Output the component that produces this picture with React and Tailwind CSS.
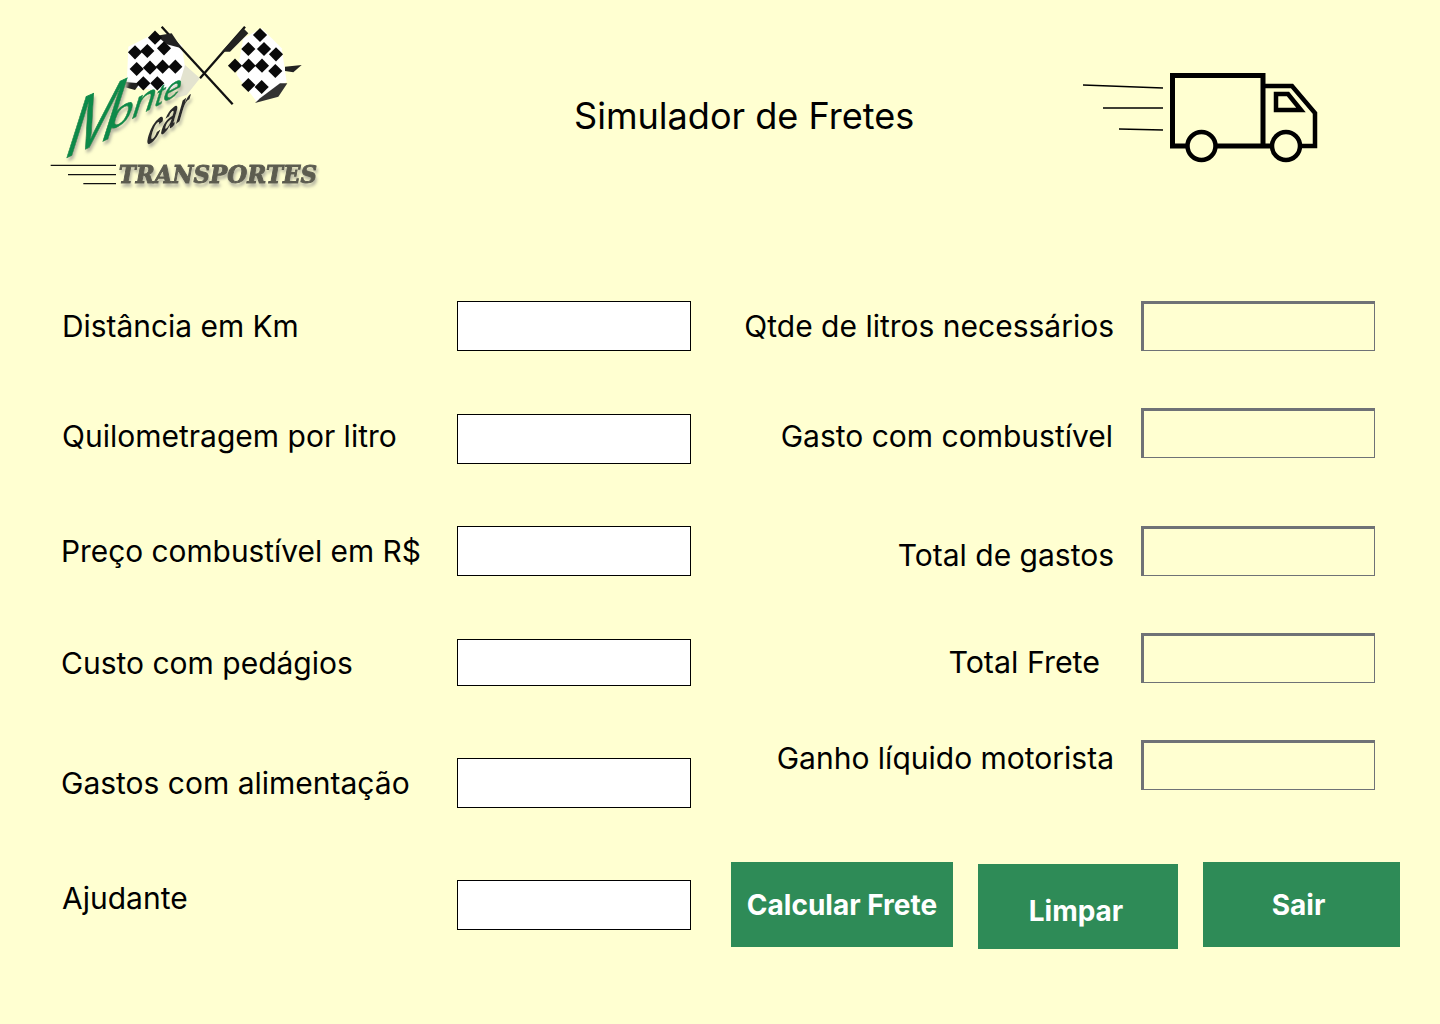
const leftFields = [
  { label: "Distância em Km", h: "h-[50px]", mt: "mt-0", cls: "pl-[62px] text-[29.9px]" },
  { label: "Quilometragem por litro", h: "h-[50px]", mt: "mt-[63px]", cls: "pl-[62px] pb-[6px] text-[30px]" },
  { label: "Preço combustível em R$", h: "h-[50px]", mt: "mt-[62px]", cls: "pl-[61px] text-[29.85px]" },
  { label: "Custo com pedágios", h: "h-[47px]", mt: "mt-[63px]", cls: "pl-[61px] pt-[2px] text-[30px]" },
  { label: "Gastos com alimentação", h: "h-[50px]", mt: "mt-[72px]", cls: "pl-[61px] text-[30px]" },
  { label: "Ajudante", h: "h-[50px]", mt: "mt-[72px]", cls: "pl-[62px] pb-[14px] text-[30px]" },
];

const rightFields = [
  { label: "Qtde de litros necessários", mt: "mt-0", cls: "pr-[27px] text-[30px]" },
  { label: "Gasto com combustível", mt: "mt-[57px]", cls: "pr-[28px] pt-[6px] text-[30px]" },
  { label: "Total de gastos", mt: "mt-[68px]", cls: "pr-[27px] pt-[8px] text-[30px]" },
  { label: "Total Frete", mt: "mt-[57px]", cls: "pr-[41px] pt-[10px] text-[30.4px]" },
  { label: "Ganho líquido motorista", mt: "mt-[57px]", cls: "pr-[27px] pb-[14px] text-[30px]" },
];

// diamonds of the two checkered flags, in zoomed logo coordinates
const checks = [
  [285, 112], [322, 108], [372, 100], [345, 68], [290, 162], [330, 158], [368, 155], [406, 155],
  [310, 205], [352, 205], [660, 60], [625, 102], [672, 102], [708, 118], [585, 152], [626, 152],
  [666, 152], [706, 168], [625, 210], [665, 216],
];

function Logo() {
  return (
    <svg width="270" height="165" viewBox="30 30 810 495" className="blur-[0.7px]">
      <defs>
        <filter id="shade" x="-5%" y="-20%" width="110%" height="160%">
          <feDropShadow dx="4" dy="10" stdDeviation="4" floodColor="#b5b5a0" />
        </filter>
      </defs>
      <path d="M265 95 L345 55 L425 90 L440 190 L400 230 L260 215 Z" fill="#fff" />
      <path d="M610 70 L665 40 L725 100 L740 200 L650 260 L590 180 Z" fill="#fff" />
      <line x1="365" y1="35" x2="578" y2="268" stroke="#111" strokeWidth="7" />
      <line x1="615" y1="35" x2="480" y2="190" stroke="#111" strokeWidth="7" />
      <path d="M350 62 L395 55 L425 100 L380 88 Z" fill="#222" />
      <path d="M610 40 L625 55 L570 110 L545 110 Z" fill="#222" />
      <path d="M245 200 L300 205 L285 225 L250 215 Z" fill="#222" />
      <path d="M645 264 L715 245 L742 205 L720 205 L660 250 Z" fill="#333" />
      <path d="M735 155 L785 150 L760 172 L735 168 Z" fill="#222" />
      {checks.map(([x, y]) => (
        <rect key={x + "-" + y} x={x - 15} y={y - 15} width="30" height="30" transform={`rotate(45 ${x} ${y})`} fill="#0a0a0a" />
      ))}
      <path d="M435 150 L480 190 L440 240 L405 250 Z" fill="#e3e3cf" />
      <g fontFamily="Liberation Sans, sans-serif" filter="url(#shade)">
        <text transform="matrix(.66 -.3 -.3 .95 65 435)" fontSize="280" fill="#0f8a4a" stroke="#0f8a4a" strokeWidth="3">M</text>
        <text transform="matrix(.95 -.5 -.3 .95 200 352)" fill="#0f8a4a" stroke="#0f8a4a" strokeWidth="2">
          <tspan fontSize="130">on</tspan>
          <tspan fontSize="100">te</tspan>
        </text>
        <text transform="matrix(.72 -.55 -.35 1.2 312 400)" fontSize="112" fontWeight="700" fill="#2a2a2a">car</text>
      </g>
      <line x1="32" y1="451" x2="228" y2="451" stroke="#111" strokeWidth="4" />
      <line x1="84" y1="479" x2="228" y2="479" stroke="#111" strokeWidth="4" />
      <line x1="130" y1="506" x2="228" y2="506" stroke="#111" strokeWidth="4" />
      <text x="236" y="505" textLength="595" lengthAdjust="spacingAndGlyphs" fontFamily="DejaVu Serif, serif" fontWeight="700" fontStyle="italic" fontSize="74" fill="#5c5c50" stroke="#5c5c50" strokeWidth="3" filter="url(#shade)">TRANSPORTES</text>
    </svg>
  );
}

function Truck() {
  return (
    <svg width="240" height="95" viewBox="1080 70 240 95" fill="none" stroke="#000">
      <path d="M1083 85 L1163 88 M1103 108 L1163 108 M1119 129 L1163 130" strokeWidth="1.6" />
      <path d="M1187 146 H1172.500 V75.500 H1263 V146 H1216 M1263 146 H1271" strokeWidth="5" />
      <path d="M1265 86 H1292 L1315 113 V146 H1301" strokeWidth="4.500" />
      <path d="M1276 94 H1288 L1301 110 H1276 Z" strokeWidth="4.500" />
      <circle cx="1201.500" cy="146" r="14" strokeWidth="4.500" />
      <circle cx="1286" cy="146" r="14" strokeWidth="4.500" />
    </svg>
  );
}

export default function App() {
  return (
    <div className="w-[1440px] h-[1024px] overflow-hidden bg-[#ffffd1] text-black font-['Inter',sans-serif]">
      <header className="flex h-[301px] items-start">
        <div className="pl-[50px] pt-[25px] w-[574px] shrink-0">
          <Logo />
        </div>
        <h1 className="w-[506px] shrink-0 pt-[94px] text-[36.1px] leading-[44px] font-normal whitespace-nowrap">Simulador de Fretes</h1>
        <div className="pt-[70px]">
          <Truck />
        </div>
      </header>

      <main className="flex">
        <section className="w-[731px] shrink-0 flex flex-col">
          {leftFields.map((f) => (
            <div key={f.label} className={`flex ${f.h} ${f.mt}`}>
              <label className={`w-[457px] shrink-0 flex items-center ${f.cls}`}>{f.label}</label>
              <input className="w-[234px] h-full bg-white border border-black outline-none" />
            </div>
          ))}
        </section>

        <section className="flex flex-col w-[709px]">
          {rightFields.map((f) => (
            <div key={f.label} className={`flex h-[50px] ${f.mt}`}>
              <label className={`w-[410px] shrink-0 flex items-center justify-end whitespace-nowrap ${f.cls}`}>{f.label}</label>
              <input className="w-[234px] h-full bg-transparent border border-l-[3px] border-t-[3px] border-[#6f7276] outline-none" />
            </div>
          ))}

          <div className="flex mt-[72px] items-start text-white text-[28px] font-bold">
            <button className="w-[222px] h-[85px] bg-[#2e8b57]">Calcular Frete</button>
            <button className="w-[200px] h-[85px] mt-[2px] ml-[25px] pt-[8px] pr-[4px] bg-[#2e8b57]">Limpar</button>
            <button className="w-[197px] h-[85px] ml-[25px] pr-[6px] bg-[#2e8b57]">Sair</button>
          </div>
        </section>
      </main>
    </div>
  );
}
